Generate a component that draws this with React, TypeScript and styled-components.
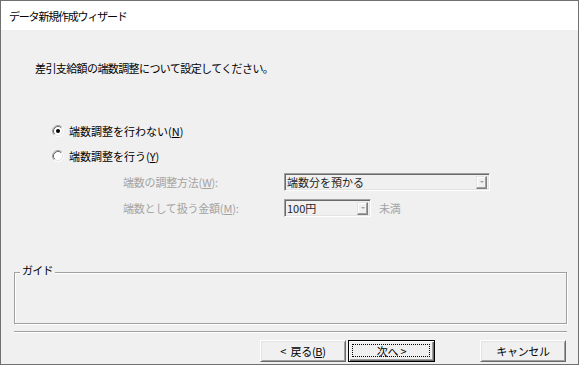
import React from "react";
import styled, { createGlobalStyle } from "styled-components";

const Global = createGlobalStyle`
  html, body { margin: 0; padding: 0; background: #ffffff; }
  body { font-family: "Noto Sans CJK JP", "Noto Sans", sans-serif; }
  * { box-sizing: border-box; }
`;

const FONT = `"Noto Sans CJK JP", "Noto Sans", sans-serif`;

const Window = styled.div`
  width: 579px;
  height: 365px;
  border: 1px solid #707070;
  display: flex;
  flex-direction: column;
  font-family: ${FONT};
  overflow: hidden;
`;

const Header = styled.div`
  height: 29px;
  background: #ffffff;
  display: flex;
  align-items: center;
  padding-left: 8px;
  font-size: 11px;
  letter-spacing: -1.2px;
  color: #000;
`;

const Body = styled.div`
  flex: 1;
  background: #f0f0f0;
  display: flex;
  flex-direction: column;
`;

const Instruction = styled.div`
  margin: 31px 0 0 34px;
  height: 14px;
  line-height: 14px;
  font-size: 11px;
  letter-spacing: -0.6px;
  color: #000;
`;

const RadioGroup = styled.div`
  margin: 46px 0 0 51px;
  display: flex;
  flex-direction: column;
  gap: 5px;
`;

const RadioRow = styled.label`
  height: 20px;
  display: flex;
  align-items: center;
  gap: 5px;
  font-size: 11px;
  line-height: 14px;
  color: #000;
`;

const Key = styled.span`
  text-decoration: underline;
  text-underline-offset: 1px;
`;

const SubGrid = styled.div`
  margin: 7px 0 0 122px;
  display: grid;
  grid-template-columns: 161px auto;
  row-gap: 8px;
  align-items: center;
  justify-items: start;
`;

const DisabledLabel = styled.span`
  font-size: 11px;
  line-height: 14px;
  color: #a3a3a3;
  letter-spacing: -0.2px;
`;

const ComboLine = styled.div`
  display: flex;
  align-items: center;
  gap: 8px;
`;

const Combo = styled.div<{ $w: number }>`
  width: ${(p) => p.$w}px;
  height: 18px;
  border: 1px solid;
  border-color: #a0a0a0 #ffffff #ffffff #a0a0a0;
  box-shadow: inset 1px 1px 0 #696969, inset -1px -1px 0 #e3e3e3;
  background: #f0f0f0;
  display: flex;
  align-items: center;
  justify-content: space-between;
  padding: 0 2px 0 2px;
  font-size: 11px;
  line-height: 14px;
  color: #1e1e1e;
`;

const DropButton = styled.span`
  width: 11px;
  height: 13px;
  border: 1px solid;
  border-color: #e3e3e3 #808080 #808080 #e3e3e3;
  box-shadow: inset -1px -1px 0 #a0a0a0, inset 1px 1px 0 #ffffff;
  background: #f0f0f0;
  display: flex;
  align-items: center;
  justify-content: center;
  &::after {
    content: "";
    border-left: 2px solid transparent;
    border-right: 2px solid transparent;
    border-top: 2px solid #a0a0a0;
  }
`;

const GroupBox = styled.div`
  position: relative;
  margin: 55px 0 0 13px;
  width: 553px;
  height: 52px;
  border: 1px solid #a0a0a0;
  box-shadow: inset 1px 1px 0 #ffffff, 1px 1px 0 #ffffff;
`;

const GroupLabel = styled.span`
  position: absolute;
  left: 5px;
  top: -10px;
  padding: 0 2px;
  background: #f0f0f0;
  font-size: 11px;
  line-height: 14px;
  color: #000;
  letter-spacing: -0.8px;
`;

const Separator = styled.div`
  margin: 7px 0 0 13px;
  width: 553px;
  height: 2px;
  border-top: 1px solid #a0a0a0;
  border-bottom: 1px solid #ffffff;
`;

const ButtonRow = styled.div`
  margin: 7px 0 0 259px;
  display: flex;
  align-items: center;
  gap: 2px;
`;

const Button = styled.div<{ $default?: boolean; $gapLeft?: number }>`
  position: relative;
  width: ${(p) => (p.$default ? 87 : 86)}px;
  height: 22px;
  margin-left: ${(p) => p.$gapLeft ?? 0}px;
  background: #f0f0f0;
  border: 1px solid;
  border-color: ${(p) =>
    p.$default ? "#000 #000 #000 #000" : "#ffffff #696969 #696969 #ffffff"};
  box-shadow: ${(p) =>
    p.$default
      ? "inset 1px 1px 0 #ffffff, inset -1px -1px 0 #696969, inset -2px -2px 0 #a0a0a0"
      : "inset 1px 1px 0 #e3e3e3, inset -1px -1px 0 #a0a0a0"};
  display: flex;
  align-items: center;
  justify-content: center;
  font-size: 11px;
  line-height: 14px;
  color: #000;
  letter-spacing: -0.3px;
  white-space: pre;
`;

const FocusRing = styled.span`
  position: absolute;
  left: 3px;
  top: 3px;
  right: 4px;
  bottom: 4px;
  border: 1px dotted #000;
  pointer-events: none;
`;

const RadioIcon: React.FC<{ checked?: boolean }> = ({ checked }) => (
  <svg width="12" height="12" viewBox="0 0 12 12">
    <circle cx="6" cy="6" r="4.5" fill="#ffffff" />
    <path d="M2.11 9.89 A5.5 5.5 0 0 1 9.89 2.11" fill="none" stroke="#a0a0a0" strokeWidth="1" />
    <path d="M9.89 2.11 A5.5 5.5 0 0 1 2.11 9.89" fill="none" stroke="#ffffff" strokeWidth="1" />
    <path d="M2.82 9.18 A4.5 4.5 0 0 1 9.18 2.82" fill="none" stroke="#696969" strokeWidth="1" />
    <path d="M9.18 2.82 A4.5 4.5 0 0 1 2.82 9.18" fill="none" stroke="#e3e3e3" strokeWidth="1" />
    {checked && <circle cx="6" cy="6" r="2" fill="#000" />}
  </svg>
);

export default function App() {
  return (
    <>
      <Global />
      <Window>
        <Header>データ新規作成ウィザード</Header>
        <Body>
          <Instruction>差引支給額の端数調整について設定してください。</Instruction>
          <RadioGroup>
            <RadioRow>
              <RadioIcon checked />
              <span>
                端数調整を行わない(<Key>N</Key>)
              </span>
            </RadioRow>
            <RadioRow>
              <RadioIcon />
              <span>
                端数調整を行う(<Key>Y</Key>)
              </span>
            </RadioRow>
          </RadioGroup>
          <SubGrid>
            <DisabledLabel>
              端数の調整方法(<Key>W</Key>):
            </DisabledLabel>
            <Combo $w={206}>
              <span>端数分を預かる</span>
              <DropButton />
            </Combo>
            <DisabledLabel>
              端数として扱う金額(<Key>M</Key>):
            </DisabledLabel>
            <ComboLine>
              <Combo $w={87}>
                <span>100円</span>
                <DropButton />
              </Combo>
              <DisabledLabel>未満</DisabledLabel>
            </ComboLine>
          </SubGrid>
          <GroupBox>
            <GroupLabel>ガイド</GroupLabel>
          </GroupBox>
          <Separator />
          <ButtonRow>
            <Button>
              {"<\u00a0\u00a0戻る("}
              <Key>B</Key>
              {")"}
            </Button>
            <Button $default>
              {"次へ\u00a0>"}
              <FocusRing />
            </Button>
            <Button $gapLeft={43}>キャンセル</Button>
          </ButtonRow>
        </Body>
      </Window>
    </>
  );
}
